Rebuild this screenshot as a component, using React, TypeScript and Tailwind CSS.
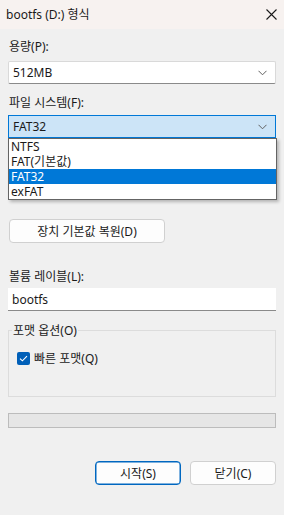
import React from "react";

const font = { fontFamily: '"Segoe UI", "Noto Sans", "Noto Sans CJK KR", sans-serif' };

function Chevron() {
  return (
    <svg width="9" height="6" viewBox="0 0 9 6" className="text-[#606060]">
      <path d="M0.5 0.8 L4.5 4.8 L8.5 0.8" fill="none" stroke="currentColor" strokeWidth="1" />
    </svg>
  );
}

export default function App() {
  return (
    <div
      className="w-[284px] h-[515px] bg-[#f0f0f0] text-[12px] leading-[15px] text-[#1a1a1a] flex flex-col"
      style={font}
    >
      <div className="h-[29px] bg-[#f7f2f0] flex items-center justify-between pl-[6px] pr-[7px] shrink-0">
        <span className="text-[12px]">bootfs (D:) 형식</span>
        <svg width="11" height="11" viewBox="0 0 11 11">
          <path d="M0.5 0.5 L10.5 10.5 M10.5 0.5 L0.5 10.5" stroke="#1a1a1a" strokeWidth="1.1" />
        </svg>
      </div>

      <div className="flex flex-col px-[8px] pt-[10px]">
        <div className="pl-[1px] h-[15px]">용량(P):</div>
        <div className="mt-[7px] h-[23px] bg-white border border-[#d9d9d9] border-b-[#8a8a8a] rounded-[2px] flex items-center justify-between pl-[4px] pr-[8px]">
          <span>512MB</span>
          <Chevron />
        </div>

        <div className="mt-[11px] pl-[1px] h-[15px]">파일 시스템(F):</div>
        <div className="relative mt-[5px]">
          <div className="h-[23px] bg-[#cce4f7] border border-[#0078d7] flex items-center justify-between pl-[4px] pr-[8px]">
            <span>FAT32</span>
            <Chevron />
          </div>
          <div className="absolute left-0 right-[-1px] top-[23px] bg-white border border-[#646464] shadow-[2px_2px_3px_rgba(0,0,0,0.25)] flex flex-col z-10 leading-[14px]">
            <div className="h-[15px] pl-[2px] flex items-center">NTFS</div>
            <div className="h-[15px] pl-[2px] flex items-center">FAT(기본값)</div>
            <div className="h-[15px] pl-[2px] flex items-center bg-[#0078d7] text-white">FAT32</div>
            <div className="h-[15px] pl-[2px] flex items-center">exFAT</div>
          </div>
        </div>

        <div className="mt-[81px] ml-[1px] w-[156px] h-[24px] bg-[#fdfdfd] border border-[#d0d0d0] rounded-[4px] flex items-center justify-center">
          장치 기본값 복원(D)
        </div>

        <div className="mt-[26px] pl-[1px] h-[15px]">볼륨 레이블(L):</div>
        <div className="mt-[4px] h-[23px] bg-white border-b border-[#8a8a8a] flex items-center pl-[4px]">
          bootfs
        </div>

        <div className="mt-[19px] relative border border-[#dcdcdc] h-[67px]">
          <div className="absolute left-[3px] top-[-8px] bg-[#f0f0f0] px-[1px] h-[15px]">포맷 옵션(O)</div>
          <div className="absolute left-[8px] top-[20px] flex items-center gap-[4px]">
            <div className="w-[13px] h-[13px] rounded-[2px] bg-[#005fb8] flex items-center justify-center">
              <svg width="9" height="7" viewBox="0 0 9 7">
                <path d="M1 3.6 L3.4 5.8 L8 1.2" fill="none" stroke="white" strokeWidth="1.1" />
              </svg>
            </div>
            <span>빠른 포맷(Q)</span>
          </div>
        </div>

        <div className="mt-[16px] h-[15px] bg-[#e6e6e6] border border-[#bcbcbc]" />

        <div className="mt-[33px] flex justify-end gap-[9px]">
          <div className="w-[86px] h-[24px] bg-[#fdfdfd] border border-[#0067c0] shadow-[inset_0_0_0_0.5px_#0067c0] rounded-[4px] flex items-center justify-center">
            시작(S)
          </div>
          <div className="w-[86px] h-[24px] bg-[#fdfdfd] border border-[#d0d0d0] rounded-[4px] flex items-center justify-center">
            닫기(C)
          </div>
        </div>
      </div>
    </div>
  );
}
